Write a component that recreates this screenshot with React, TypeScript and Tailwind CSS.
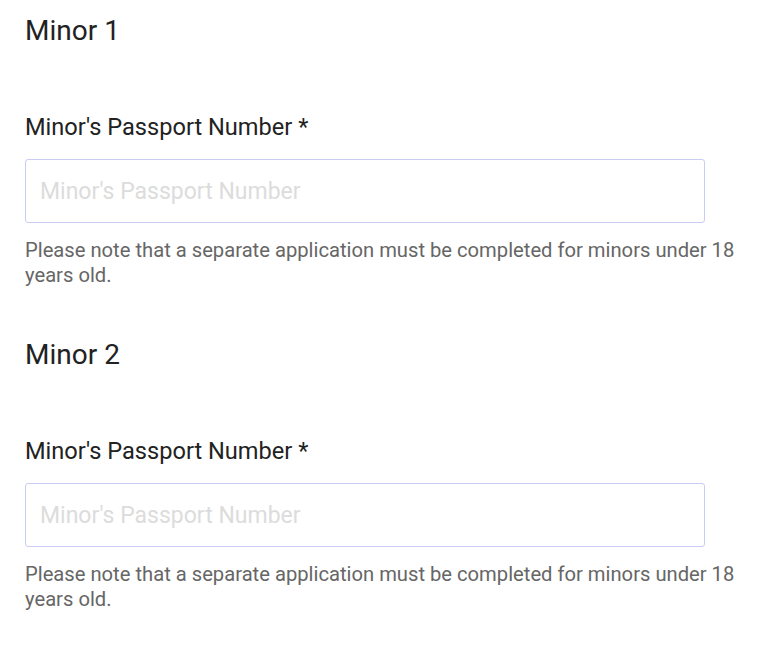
import React from 'react'

const font = { fontFamily: 'Roboto, "Liberation Sans", sans-serif' }

function MinorSection({ index }: { index: number }) {
  return (
    <div>
      <h2 className="pt-[15px] text-[28px] leading-[32px] font-normal text-[#222]">Minor {index}</h2>
      <label className="mt-[66px] block text-[23.6px] leading-[28px] text-[#222]">
        Minor's Passport Number *
      </label>
      <input
        type="text"
        placeholder="Minor's Passport Number"
        className="mt-[18px] block h-[64px] w-[680px] rounded-[3px] border border-[#c9ccf3] bg-white px-[14px] text-[23px] text-[#222] outline-none placeholder:text-[#dcdcdc]"
      />
      <p className="mt-[15px] text-[20.2px] leading-[25px] text-[#666]">
        Please note that a separate application must be completed for minors under 18 years old.
      </p>
      <div className="h-[36px]" />
    </div>
  )
}

export default function App() {
  return (
    <div className="min-h-screen bg-white pl-[25px] pr-[15px]" style={font}>
      <MinorSection index={1} />
      <MinorSection index={2} />
    </div>
  )
}
